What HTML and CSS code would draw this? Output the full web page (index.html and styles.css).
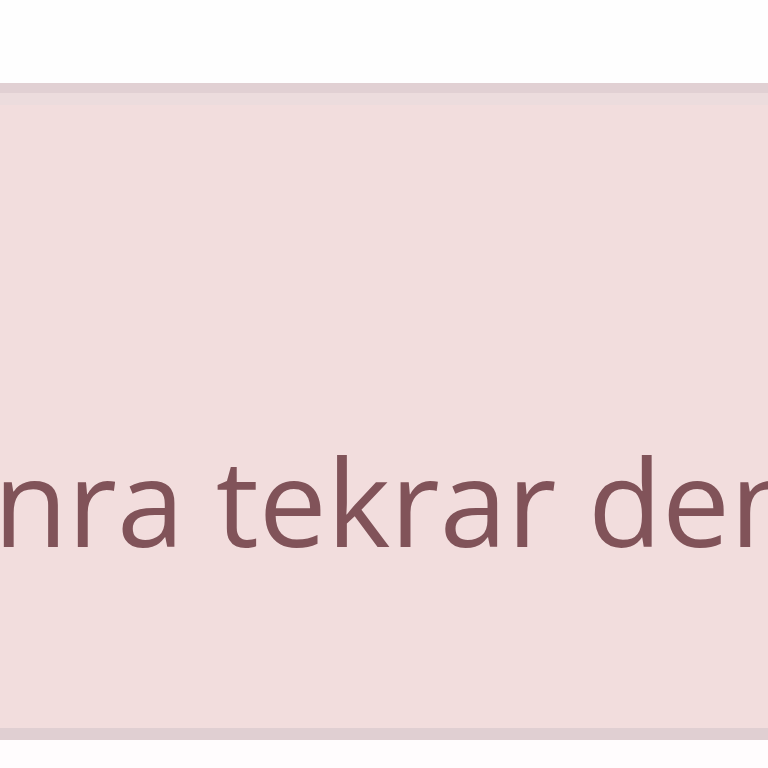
FILE: index.html
```html
<!DOCTYPE html>
<html lang="tr">
<head>
<meta charset="utf-8">
<title>Uyarı</title>
<link rel="stylesheet" href="styles.css">
</head>
<body>
<div class="page">
  <div class="alert">
    <p class="alert-text">Lütfen daha sonra tekrar deneyin.</p>
  </div>
</div>
</body>
</html>
```

FILE: styles.css
```css
html, body {
  margin: 0;
  padding: 0;
}
body {
  background: #fffcfd;
  width: 768px;
  height: 768px;
  overflow: hidden;
}
.page {
  padding-top: 83px;
  background: linear-gradient(#fefefe 0, #fefefe 83px, #fffbfd 83px);
}
.alert {
  margin-left: -846px;
  width: 2400px;
  background: #f2dddd;
  border-top: 10px solid #e1d0d3;
  border-bottom: 12px solid #e0cfd2;
  box-shadow: inset 0 12px 0 #ecdcdd;
  padding-top: 347px;
  padding-bottom: 167px;
}
.alert-text {
  margin: 0;
  font-family: "Open Sans", "Noto Sans", sans-serif;
  font-size: 121px;
  line-height: 121px;
  font-weight: 500;
  color: #815359;
  white-space: nowrap;
}
```
